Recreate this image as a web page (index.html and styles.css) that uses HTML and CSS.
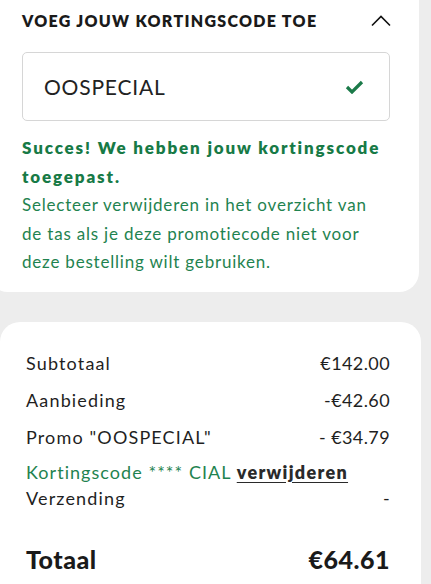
FILE: index.html
```html
<!DOCTYPE html>
<html lang="nl">
<head>
<meta charset="utf-8">
<link rel="stylesheet" href="styles.css">
</head>
<body>
<section class="card promo-card">
  <div class="promo-head">
    <h2 class="promo-title">VOEG JOUW KORTINGSCODE TOE</h2>
    <svg class="chevron" width="20" height="12" viewBox="0 0 20 12"><polyline points="1,10.5 10,1.5 19,10.5" fill="none" stroke="#111" stroke-width="1.6"/></svg>
  </div>
  <div class="code-field">
    <span class="code-value">OOSPECIAL</span>
    <svg class="check" width="19" height="14" viewBox="0 0 19 14"><polyline points="2,7 7,12 17,2" fill="none" stroke="#1b7a49" stroke-width="3.2"/></svg>
  </div>
  <p class="msg msg-strong">Succes! We hebben jouw kortingscode toegepast.</p>
  <p class="msg">Selecteer verwijderen in het overzicht van de tas als je deze promotiecode niet voor deze bestelling wilt gebruiken.</p>
</section>

<section class="card summary-card">
  <div class="row r-gap"><span>Subtotaal</span><span class="amt">€142.00</span></div>
  <div class="row r-gap"><span>Aanbieding</span><span class="amt">-€42.60</span></div>
  <div class="row r-gap-s"><span>Promo "OOSPECIAL"</span><span class="amt">- €34.79</span></div>
  <div class="code-line">Kortingscode **** CIAL <a class="remove" href="#">verwijderen</a></div>
  <div class="row"><span>Verzending</span><span class="amt">-</span></div>
  <div class="row total"><span>Totaal</span><span>€64.61</span></div>
  <p class="note">Inclusief btw en belastingen</p>
</section>
</body>
</html>
```

FILE: styles.css
```css
html, body {
  margin: 0;
  padding: 0;
}
body {
  background: #ededed;
  font-family: Lato, "Open Sans", sans-serif;
  color: #1f1f1f;
  overflow: hidden;
  height: 584px;
}
.card {
  background: #fff;
  border-radius: 20px;
}
.promo-card {
  margin: -20px 12px 0 -12px;
  padding: 31px 29px 15px 34px;
}
.promo-head {
  display: flex;
  justify-content: space-between;
  align-items: center;
  height: 20px;
}
.promo-title {
  margin: 0;
  font-size: 16px;
  font-weight: 800;
  line-height: 20px;
  letter-spacing: 1.3px;
  color: #1a1a1a;
}
.chevron {
  display: block;
  margin-right: -1px;
}
.code-field {
  margin-top: 21px;
  height: 69px;
  box-sizing: border-box;
  border: 1px solid #d6d6d6;
  border-radius: 5px;
  display: flex;
  align-items: center;
  justify-content: space-between;
  padding: 0 25px 0 21px;
}
.code-value {
  font-size: 21px;
  letter-spacing: 0.8px;
  color: #222;
}
.check {
  display: block;
}
.msg {
  margin: 0;
  font-size: 17px;
  line-height: 28.5px;
  color: #1f8350;
  letter-spacing: 0.8px;
}
.msg-strong {
  margin-top: 13px;
  font-weight: 800;
  color: #177a46;
  letter-spacing: 1.85px;
}
.summary-card {
  margin: 30px 10px 0 0;
  padding: 29px 31px 20px 26px;
}
.row {
  display: flex;
  justify-content: space-between;
  font-size: 18px;
  line-height: 24px;
  letter-spacing: 1.15px;
}
.amt {
  letter-spacing: 0.4px;
}
.r-gap { margin-bottom: 13px; }
.r-gap-s { margin-bottom: 11px; }
.code-line {
  font-size: 18px;
  line-height: 24px;
  color: #1f8350;
  letter-spacing: 1.05px;
  margin-bottom: 2px;
}
.remove {
  color: #2a2a2a;
  font-weight: 800;
  letter-spacing: 1.3px;
  text-decoration: underline;
  text-underline-offset: 3px;
}
.total {
  margin-top: 33px;
  font-size: 25px;
  line-height: 32px;
  font-weight: 900;
  letter-spacing: 0.5px;
  color: #1a1a1a;
}
.note {
  margin: 8px 0 0;
  font-size: 14px;
  color: #666;
}
```
